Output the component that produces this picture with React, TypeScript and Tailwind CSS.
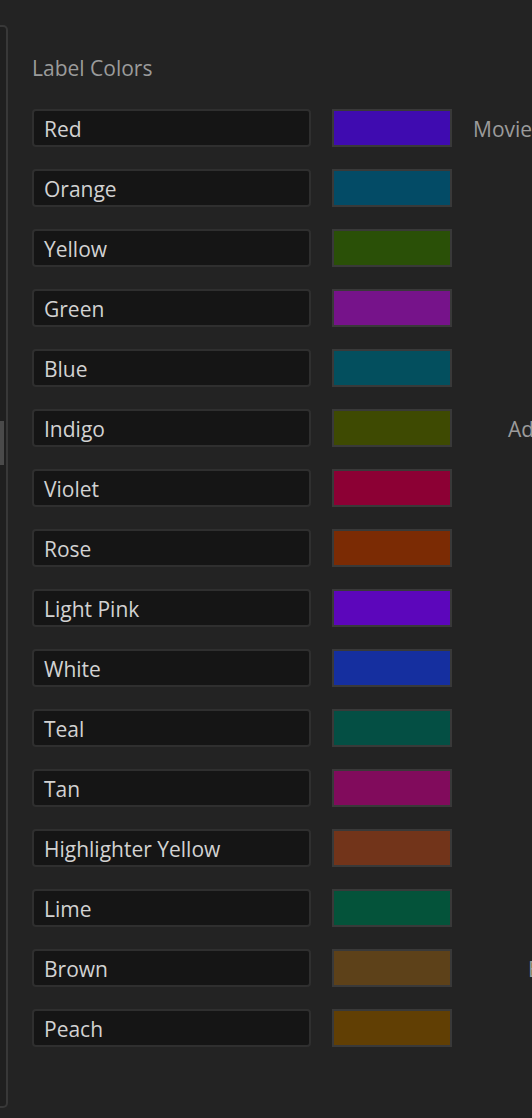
const rows: { name: string; color: string; side?: string; sideClass?: string }[] = [
  { name: 'Red', color: '#3f0bb0', side: 'Movie', sideClass: 'ml-[21px]' },
  { name: 'Orange', color: '#034b66' },
  { name: 'Yellow', color: '#2a5007' },
  { name: 'Green', color: '#76138a' },
  { name: 'Blue', color: '#034f5e' },
  { name: 'Indigo', color: '#3e4a02', side: 'Ad', sideClass: 'ml-[56px]' },
  { name: 'Violet', color: '#8c0034' },
  { name: 'Rose', color: '#7b2b04' },
  { name: 'Light Pink', color: '#5c06bb' },
  { name: 'White', color: '#152f9f' },
  { name: 'Teal', color: '#044f44' },
  { name: 'Tan', color: '#810b5c' },
  { name: 'Highlighter Yellow', color: '#72341a' },
  { name: 'Lime', color: '#04533a' },
  { name: 'Brown', color: '#5d4119', side: 'Brown', sideClass: 'ml-[76px]' },
  { name: 'Peach', color: '#613f04' },
];

export default function App() {
  return (
    <div
      className="relative flex w-[532px] h-[1118px] overflow-hidden bg-[#232323]"
      style={{ fontFamily: '"Open Sans", "Noto Sans", sans-serif' }}
    >
      {/* left panel edge */}
      <div className="mt-[25px] h-[1083px] w-[8px] shrink-0 flex flex-col rounded-r-[5px] border-y-2 border-r-2 border-[#383838] bg-[#1f1f1f]">
        <div className="mt-[394px] h-[44px] w-[4px] bg-[#4a4a4a]" />
      </div>

      <div className="flex flex-col pl-[24px] pt-[54px]">
        <div className="text-[21px] leading-[28px] text-[#9b9b9b]">Label Colors</div>

        <div className="mt-[27px] flex flex-col gap-[22px]">
          {rows.map((r) => (
            <div key={r.name} className="flex items-center h-[38px]">
              <div className="flex items-center w-[279px] h-[38px] shrink-0 rounded-[4px] border-2 border-[#2f2f2f] bg-[#151515] pl-[10px] pt-[3px] text-[21px] text-[#d2d2d2]">
                {r.name}
              </div>
              <div className="ml-[21px] w-[120px] h-[38px] shrink-0 border-2 border-[#393939]">
                <div className="w-full h-full" style={{ backgroundColor: r.color }} />
              </div>
              {r.side && (
                <div className={`${r.sideClass} pt-[3px] whitespace-nowrap text-[21px] text-[#9b9b9b]`}>
                  {r.side}
                </div>
              )}
            </div>
          ))}
        </div>
      </div>
    </div>
  );
}
